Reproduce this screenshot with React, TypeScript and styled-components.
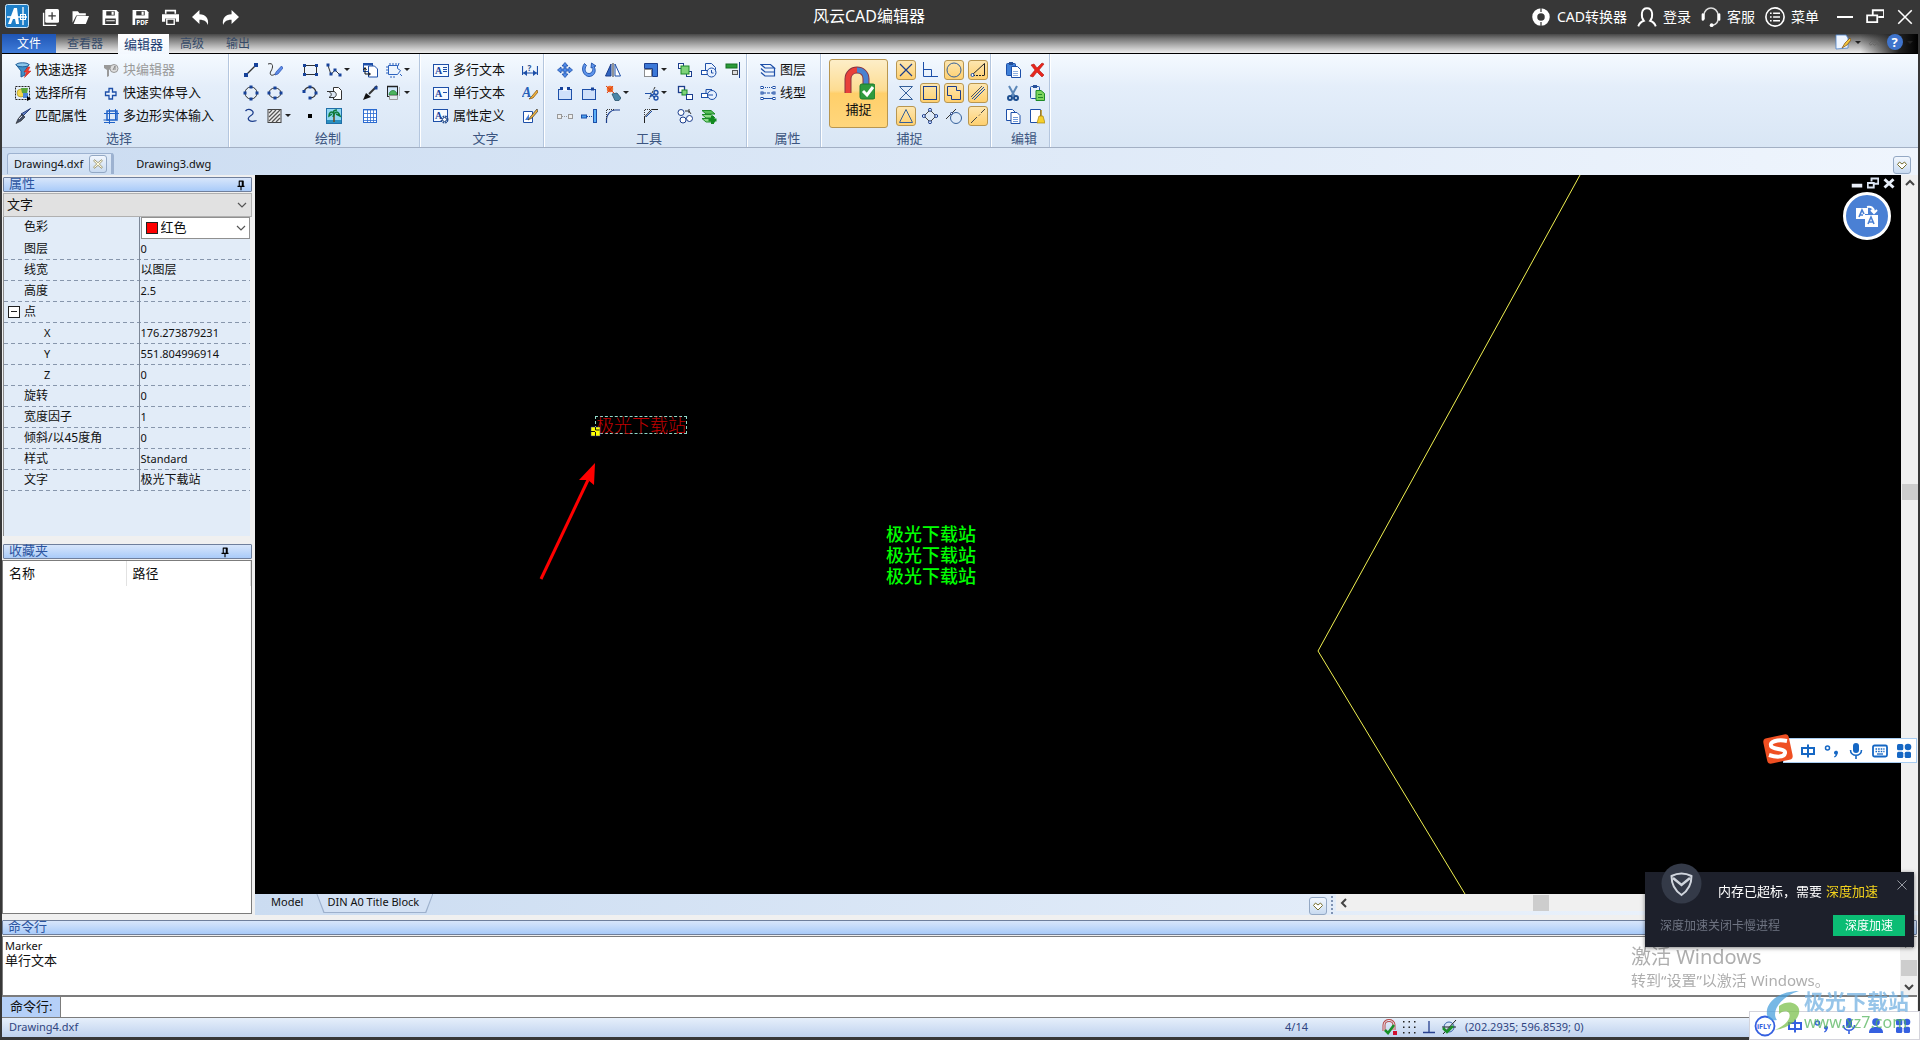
import React from "react";
import styled, { createGlobalStyle, css } from "styled-components";

const Global = createGlobalStyle`
  * { box-sizing: border-box; }
  body { margin: 0; background: #000; }
  body, button, input, select, table {
    font-family: "Noto Sans", "Noto Sans CJK SC", sans-serif;
    font-size: 12px;
    line-height: 16px;
    color: #101010;
  }
  button { background: none; border: 0; padding: 0; margin: 0; cursor: pointer; }
  svg { display: block; flex: none; }
`;

/* ---------- icons ---------- */

const B = "#1d4fa8";
const N = "#1b3d8c";
const dot = (x: number, y: number, s = 3) => (
  <rect x={x - s / 2} y={y - s / 2} width={s} height={s} fill="#16429a" stroke="none" />
);
const paper = (x: number, y: number) => (
  <path d={`M${x} ${y}h6l3 3v8h-9z`} fill="#fff" stroke={B} />
);

const ICONS: Record<string, React.ReactNode> = {
  filter: (<>
    <path d="M1 2.5 6 9v6l4-2V9l4-6.5z" fill="#3f8fc8" stroke="#1f5f9a" />
    <ellipse cx="7.5" cy="2.8" rx="6.5" ry="2" fill="#8cc6ea" stroke="#1f5f9a" />
    <path d="m13 5-4 5h2.5L9.5 15.5 16 9h-3l2-4z" fill="#ee3a30" stroke="#c02018" strokeWidth=".5" />
  </>),
  selectAll: (<>
    <rect x=".5" y="1.5" width="14" height="13" fill="none" stroke="#222" strokeDasharray="2 1" />
    <circle cx="6" cy="8" r="4" fill="#f3d64a" stroke="#9a8a20" strokeWidth=".6" />
    <path d="M6 3h7l-1 6-5-1z" fill="#57a43c" /><rect x="8" y="8" width="5" height="5" fill="#4a87d8" />
    <path d="M12 11v5l4-2z" fill="#000" />
  </>),
  match: (<>
    <path d="M15.5.5 8 8l-2-2z" fill="#5f7fc4" stroke="#2a3f78" />
    <path d="m7 6 3 3-4 4-5 2.5L3 11z" fill="#444f66" stroke="#222" strokeWidth=".6" /><path d="m4 11 3-3" stroke="#dde" />
  </>),
  block: (<>
    <path d="M1 3h8v3L6 8v6l-2 1V8L1 6z" fill="#999" /><circle cx="11" cy="6.5" r="4" fill="#ddd" stroke="#999" />
    <path d="M10 8l2-4v4" stroke="#888" fill="none" />
  </>),
  plus: <path d="M6 3.5h3.5V7H13v3.5H9.5V14H6v-3.5H2.5V7H6z" fill="#eaf3ff" stroke={B} strokeWidth="1.3" />,
  polyInput: (<>
    <rect x="4" y="3" width="10" height="9" fill="none" stroke="#1f62c8" strokeWidth="1.5" />
    <path d="M1 5.5h15M1 14.5h11M6.5 1v15M12.5 1v11M.5 12h6" stroke="#1f62c8" fill="none" />
  </>),
  line: <><path d="M3 13 13 3" stroke="#333" strokeWidth="1.3" />{dot(3, 13, 4)}{dot(13, 3, 4)}</>,
  freehand: (<>
    <path d="M1 2c6-2 5 4 3 7s0 6 4 3" fill="none" stroke="#333" />
    <path d="m14.5 4 1.5 2-5 6-3 1 1-3z" fill="#5d8be8" stroke="#2850b0" strokeWidth=".7" />
  </>),
  rect: <><rect x="2.5" y="3.5" width="12" height="9" fill="none" stroke="#333" />{dot(2.5, 3.5)}{dot(14.5, 3.5)}{dot(2.5, 12.5)}{dot(14.5, 12.5)}</>,
  polyline: <><path d="M2 3.5 5 12.5 9 8l5 5" fill="none" stroke="#333" />{dot(2, 3)}{dot(5, 12)}{dot(9, 8)}{dot(14, 13)}</>,
  insertBlock: (<>
    <rect x="1.5" y="1.5" width="9" height="8" fill="#fff" stroke={B} /><path d="M1 2.5h10" stroke={B} strokeWidth="2" />
    {paper(6.5, 4)}<path d="M3 6v6h5M1.5 8 3 5.5 4.5 8M6.5 10.5 8.5 12l-2 1.5" fill="none" stroke="#111" />
  </>),
  region: <path d="M2.5 3.5v9h9M2.5 3.5h9v3l3 2-3 4M4 1v2M7 1v2M10 1v2M13 1l-1 3M0 5h2M0 8h2M0 11h2M5 14v2M8 14v2M14 12l2 2" fill="none" stroke="#2c62be" />,
  circle: <><circle cx="8" cy="8" r="6" fill="none" stroke="#333" />{dot(8, 2)}{dot(8, 14)}{dot(2, 8)}{dot(14, 8)}</>,
  ellipse: <><ellipse cx="8" cy="8" rx="6" ry="5" fill="none" stroke="#333" />{dot(8, 3)}{dot(8, 13)}{dot(2, 8)}{dot(14, 8)}</>,
  arc: <><path d="M2 6.5C4 1 12 0 14 7c0 3-2 6-6 6" fill="none" stroke="#333" strokeWidth="1.3" />{dot(2, 6.5)}{dot(8, 2)}{dot(14, 8)}{dot(8, 13)}</>,
  solid: <><path d="M7.5 2.5h5l3 3v9h-8z" fill="#fff" stroke="#333" /><path d="M1 6.5h7c3 1 3 5 0 6H3c3-2 3-4 0-6" fill="#dfe8f4" stroke="#333" /></>,
  leader: <><path d="M15 1 7 9" stroke="#333" strokeWidth="2" /><path d="M1 15 4 8l5 4z" fill="#111" />{dot(14, 3)}</>,
  image: (<>
    <rect x="1.5" y="1.5" width="10" height="10" fill="#cfe6fa" stroke="#222" /><path d="M1 1.5h11" stroke="#222" strokeWidth="1.5" />
    <path d="M3 10c0-6 8-6 8 0z" fill="#4fb35c" stroke="#1d7a30" strokeWidth=".7" /><path d="M3.5 10.5h8v4h-8z" fill="#e4e8ec" stroke="#999" />
    <path d="M13.5 2v9" stroke="#aaa" />
  </>),
  spline: <path d="M2.5 3C6-1 14 4 8 7.5S7 15 13.5 12.5" fill="none" stroke={N} strokeWidth="1.3" />,
  hatch: <><rect x="1" y="1.5" width="13" height="13" fill="#eee" stroke="#444" /><path d="m2 5 3-3M2 9l7-7M2 13l11-11M5 14l8-8M9 14l4-4" stroke="#555" strokeWidth="1.3" /></>,
  point: <rect x="6" y="6" width="4" height="4" fill="#000" />,
  palm: (<>
    <rect x=".5" y=".5" width="15" height="15" fill="#8fd6f2" stroke="#1f6fa8" /><path d="M1 12h14v3H1z" fill="#2a8fc0" />
    <path d="M8 6v8" stroke="#6a4a20" strokeWidth="1.6" /><path d="M8 6C5 2 3 5 3 8l3-2M8 6c3-4 5-1 6 2l-4-2M8 6 7 9M8 6C6 3 9 2 11 2" stroke="#0d7a3a" strokeWidth="1.5" fill="none" />
  </>),
  table: <><rect x="1.5" y="1.5" width="13" height="13" fill="#fff" stroke="#2a6ad0" /><path d="M1 2h14M1 5.5h14M1 9.5h14M1 12.5h14M5.5 2v13M8.5 2v13M11.5 2v13" stroke="#2a6ad0" strokeWidth=".8" /></>,
  mtext: <><rect x=".5" y="2.5" width="15" height="12" fill="#f5faff" stroke={B} /><text x="2" y="12" fontSize="10" fontWeight="700" fontFamily="Liberation Serif" fill="#17409a">A</text><path d="M10 5.5h4M10 7.5h4M10 9.5h4" stroke={B} /></>,
  stext: <><rect x=".5" y="2.5" width="15" height="12" fill="#f5faff" stroke={B} /><text x="2" y="12" fontSize="10" fontWeight="700" fontFamily="Liberation Serif" fill="#17409a">A</text><path d="M10 7.5h4" stroke={B} /></>,
  attdef: <><rect x=".5" y="1.5" width="14" height="12" fill="#f5faff" stroke={B} /><text x="2" y="11" fontSize="10" fontWeight="700" fontFamily="Liberation Serif" fill="#17409a">A</text><circle cx="11.5" cy="11.5" r="3" fill="#fff" stroke="#27508f" strokeWidth="2" strokeDasharray="1.6 .8" /><circle cx="11.5" cy="11.5" r="2" fill="#fff" stroke="#27508f" /></>,
  dimText: <><path d="M.5 4v9M15.5 4v9M1 11h14" stroke={B} strokeWidth="1.2" /><path d="M1 11l4-3v6zM15 11l-4-3v6z" fill={B} /><text x="5.5" y="9" fontSize="8" fontWeight="700" fill="#27508f">?</text></>,
  fontStyle: <><text x="0" y="12" fontSize="14" fontWeight="700" fontStyle="italic" fontFamily="Liberation Serif" fill="#2760b8">A</text><path d="m15 5-5 6-3 3 4-1 5-6z" fill="#f3b53c" stroke="#7a4a10" strokeWidth=".7" /></>,
  editText: <><path d="M1.5 3.5h9v11h-9z" fill="#fff" stroke={B} /><path d="m3 12 4-6v6z" fill="#4a80d8" /><path d="m15 1-6 7-3 4 4-2 6-7z" fill="#f3b53c" stroke="#333" strokeWidth=".7" /></>,
  move: <path d="M8 .5 11 4H9v3h3V5l3.500 3L12 11V9H9v3h2l-3 3.500L5 12h2V9H4v2L.5 8 4 5v2h3V4H5z" fill="#4f8ae8" stroke={B} strokeWidth=".8" />,
  rotate: <path d="M3.5 1.5C-1 7 3 14.5 8 14.5s8-5 5-10l2-.5-4.5-3-.5 5 1.5-.5c1 3-1 6-3.500 6-4 0-5-5-2.500-8z" fill="#5d94ec" stroke={B} strokeWidth=".9" />,
  mirror: <><path d="M6 2v12H.5z" fill="#2f64c0" stroke={N} /><path d="M10 2v12h5.500z" fill="#fff" stroke={B} /><path d="M8 1v14" stroke="#333" /></>,
  scale: <><path d="M1.5 1.5h13v13h-5v-8h-8z" fill="#3b78d8" stroke={N} /><rect x="1.5" y="7.5" width="7" height="7" fill="#fff" stroke="#222" strokeDasharray="1 1" /></>,
  copyG: <><rect x="1.5" y="1.5" width="5" height="5" fill="#fff" stroke={N} /><rect x="9.5" y="9.5" width="5" height="5" fill="#fff" stroke={N} /><rect x="4" y="4" width="8" height="8" fill="#7ed37a" stroke="#1d8a28" /></>,
  copyC: <><path d="M4.5 8V1.5h6l4 4V12" fill="#eef5ff" stroke={B} /><rect x=".5" y="8.5" width="6" height="4" fill="#fff" stroke={B} /><circle cx="10.5" cy="10.5" r="4.5" fill="#e6f0ff" stroke={B} /><path d="M10.5 8v3h2" stroke={B} fill="none" /></>,
  align: <><rect x="1" y="2" width="11" height="4" fill="#2a9a38" stroke="#157022" /><rect x="7.5" y="8.5" width="5" height="4" fill="#ddd" stroke="#555" /><path d="M14.5 0v16" stroke={N} /></>,
  breakA: <><rect x="1.5" y="4.5" width="13" height="10" fill="#cfe0fa" stroke={B} /><path d="M5 4.5h6" stroke="#fff" strokeWidth="2" />{dot(4.5, 3.5, 3)}{dot(11.5, 3.5, 3)}</>,
  breakB: <><rect x="1.5" y="4.5" width="13" height="10" fill="#cfe0fa" stroke={B} />{dot(11.5, 4, 3)}</>,
  explode: <><circle cx="5" cy="4" r="3.2" fill="#f0702a" /><path d="m1 1 8 7M8 1 2 8" stroke="#e03a10" /><path d="m7 9 5-1 4 5-2 2.500-4 0z" fill="#4a86a8" stroke="#27506a" strokeWidth=".8" /></>,
  trim: <><path d="M12 2 6 14" stroke="#333" strokeDasharray="3 1" /><path d="M2 8.5h6" stroke={B} /><circle cx="13" cy="7.5" r="2" fill="none" stroke={B} strokeWidth="1.3" /><circle cx="13" cy="13" r="2" fill="none" stroke={B} strokeWidth="1.3" /><path d="m7 12 5-4M7 8l5 5" stroke={B} strokeWidth="1.3" /></>,
  copyD: <><rect x="1.5" y="1.5" width="6" height="6" fill="#fff" stroke={N} strokeWidth="1.3" /><rect x="5" y="5" width="5" height="5" fill="#7ed37a" stroke="#1d8a28" /><rect x="9.5" y="9.5" width="6" height="5" fill="#fff" stroke={N} /></>,
  copyE: <><path d="M5 8V4.500h6" fill="none" stroke={B} /><rect x=".5" y="8.5" width="6" height="4" fill="#fff" stroke={B} /><circle cx="11" cy="10" r="4.5" fill="#e6f0ff" stroke={B} /><path d="M6 10h6" stroke={B} /></>,
  joinA: <><rect x=".5" y="6.5" width="4" height="4" fill="#eee" stroke="#999" /><rect x="11.5" y="6.5" width="4" height="4" fill="#eee" stroke="#999" /><path d="M5 8.5h6" stroke="#999" strokeDasharray="1 1" /></>,
  extend: <><rect x=".5" y="7" width="5" height="3" fill="#4aa0f0" stroke={B} /><path d="M6 8.5h5" stroke={B} strokeDasharray="1 1" /><rect x="12.5" y="1.5" width="3" height="13" fill="#5ab0f8" stroke={B} /></>,
  fillet: <><path d="M1.5 15V11C2 6 6 2 10 2h5" fill="none" stroke={N} strokeWidth="1.2" /><path d="M1.5 2v9M2 1.5h8" stroke="#333" strokeDasharray="1 1" /></>,
  chamfer: <><path d="M1.5 15V9l7-7.500H15" fill="none" stroke="#222" /><path d="M1.5 2v7M2 1.5h6" stroke="#333" strokeDasharray="1 1" /><path d="m3 9 6-6" stroke={B} /></>,
  array: <><circle cx="4" cy="4.5" r="3" fill="#fff" stroke={N} /><circle cx="6" cy="12" r="3" fill="#fff" stroke={N} /><circle cx="12.5" cy="10.5" r="3" fill="#fff" stroke={N} /><path d="M8 3h4l2 3M12 1v4" fill="none" stroke="#333" /></>,
  layersAdd: <><path d="M1 10.5h9l4 3.5H5z" fill="#8fdc88" stroke="#1d8a28" /><path d="M1 6.500h9l4 3.500H5z" fill="#8fdc88" stroke="#1d8a28" /><path d="M1 2.500h9l4 3.500H5z" fill="#58bd58" stroke="#1d8a28" /><path d="M11.5 8v8M7.500 12h8" stroke="#128a20" strokeWidth="3" /></>,
  layers: <path d="M1 2.5h9.500l4 3.500H5zM1 6.500 5 10h9.500V6.500M1 10.500 5 14h9.500v-3.500" fill="none" stroke={B} strokeWidth="1.2" />,
  linetype: <><path d="M3 2.5h11" stroke={B} strokeDasharray="1 1" /><path d="M3 8h11" stroke={B} strokeDasharray="3 1" /><path d="M3 13.5h11" stroke={B} />{[2.5, 8, 13.5].map(y => <g key={y} fill="#fff" stroke={B}><rect x="1" y={y - 1} width="2" height="2" /><rect x="13" y={y - 1} width="2" height="2" /></g>)}</>,
  sX: <path d="M2 2 14 14M14 2 2 14" stroke={N} strokeWidth="1.2" />,
  sPerp: <path d="M1.5 0v14.500H16M1.500 7.500h8v7" fill="none" stroke={B} />,
  sCircle: <circle cx="8" cy="8" r="7" fill="none" stroke="#35609a" />,
  sAngle: <><path d="M2 13 14.500 1.500v12" fill="none" stroke="#222" /><path d="M3 13.500h11" stroke="#222" strokeDasharray="2 1" /><circle cx="2.5" cy="13" r="1.5" fill="#fff" stroke={B} /></>,
  sHour: <path d="M1.5 1.5h13l-13 13h13z" fill="none" stroke="#35609a" />,
  sSquare: <rect x="1.5" y="1.5" width="13" height="13" fill="none" stroke={N} />,
  sInsert: <path d="M1.5 1.5h9v4h4v9h-9v-4h-4z" fill="none" stroke={N} />,
  sPar: <><path d="M1 12 12 1" stroke="#555" /><path d="M4 15 15 4M2 14 14 2" stroke={B} /></>,
  sTri: <path d="M8 1.5 14.500 14.500h-13z" fill="none" stroke="#35609a" />,
  sQuad: <><path d="M8 2 14 8 8 14 2 8z" fill="none" stroke="#444" />{[[8, 1.8], [14.2, 8], [8, 14.2], [1.8, 8]].map(([x, y]) => <circle key={`${x}-${y}`} cx={x} cy={y} r="1.5" fill="#dfeaff" stroke={N} />)}</>,
  sTan: <><circle cx="10" cy="10" r="5.5" fill="none" stroke="#35609a" /><path d="M0 11 10 1" stroke="#333" /><circle cx="5.5" cy="5.5" r="1" fill="#fff" stroke={N} /></>,
  sExt: <path d="M1 15 7 9M9 7.500l1-1M11 5l4-4" stroke="#444" />,
  paste: <><rect x="1.5" y="1.5" width="9" height="12" rx="1" fill="#3f80d8" stroke={B} /><rect x="4" y="0" width="4" height="3" fill="#26509a" />{paper(6.5, 4.5)}<path d="M8 9.5h5M8 11.500h5M8 13.500h5" stroke="#8fb0e0" /></>,
  del: <path d="M2 3 5 2l3 4 5-5 2 1-5 6 5 5-2 2-5-5-4 5-3-1 5-6z" fill="#e8251c" stroke="#b01810" strokeWidth=".6" />,
  cut: <><path d="M4 1 9.500 11M12 1 6.500 11" stroke="#5b87b8" strokeWidth="2" /><circle cx="5" cy="13" r="2" fill="none" stroke="#1d4f90" strokeWidth="2" /><circle cx="11" cy="13" r="2" fill="none" stroke="#1d4f90" strokeWidth="2" /></>,
  pasteG: <><rect x="1.5" y="1.5" width="9" height="12" rx="1" fill="#e8f0fa" stroke={B} /><rect x="4" y="0" width="4" height="3" fill="#26509a" /><path d="M7 5.500h5l3.500 3V15.500H7z" fill="#7bd45c" stroke="#1d8a28" /><path d="M9 9.500h4M9 12.500h5" stroke="#1d8a28" /></>,
  copy: <>{paper(1.5, 1.5)}{paper(6, 4.5)}<path d="M8 9.500h5M8 11.500h5M8 13.500h5" stroke="#6f98d8" /></>,
  clean: <><path d="M1.5 1.5h10v13h-10z" fill="#fff" stroke={B} /><path d="M12 2v6" stroke="#b88a10" strokeWidth="1.5" /><path d="M10 8h4l2 7H8z" fill="#f6d02c" stroke="#a88410" strokeWidth=".7" /></>,
  newFile: <><path d="M1.5 3.500v12h12" fill="none" stroke="#fff" strokeWidth="1.3" /><rect x="3" y="0" width="13" height="13" rx="1.5" fill="#fff" /><path d="M9.500 3v7M6 6.500h7" stroke="#373737" strokeWidth="1.2" /></>,
  open: <><path d="M.5 13V2h5l1.500 2h6v2H4z" fill="#fff" /><path d="M4.500 6.500H16L13 14H1.500z" fill="#fff" /></>,
  save: <><path d="M.5 1h13l2 2v12H.5z" fill="#fff" /><path d="M4 2h8v4H4zM3 9h10v5H3z" fill="#373737" /><path d="M9 2.500h2v3H9zM4 10.500h8v1H4z" fill="#fff" /></>,
  savePdf: <><path d="M.5 1h13l2 2v12H.5z" fill="#fff" /><path d="M4 2h8v4H4z" fill="#373737" /><path d="M9 2.500h2v3H9z" fill="#fff" /><path d="M3 9h13v7H3z" fill="#373737" /><text x="4" y="15.5" fontSize="6" fontWeight="700" fill="#fff">PDF</text></>,
  print: <><path d="M3.500 4.500v-3h9v3" fill="none" stroke="#fff" strokeWidth="1.5" /><path d="M0 5h16v7h-3V9H3v3H0z" fill="#fff" /><path d="M4.500 9.500h7v5h-7z" fill="none" stroke="#fff" strokeWidth="1.3" /></>,
  undo: <path d="M7 1v4c6 0 9 4 8 10-1-3-3-5-8-5v4L0 7.500z" fill="#fff" />,
  redo: <path d="M9 1v4C3 5 0 9 1 15c1-3 3-5 8-5v4l7-6.500z" fill="#fff" />,
  ring: <><circle cx="8" cy="8" r="5" fill="none" stroke="#fff" strokeWidth="4" /><path d="M8 0v4M8 12v4" stroke="#373737" /></>,
  user: <path d="M1 15.500c1-3 3-4 4.500-4.500C3 8 3 1 8 1s5 7 2.500 10c1.500.5 3.500 1.500 4.500 4.500" fill="none" stroke="#fff" strokeWidth="1.5" />,
  headset: <><path d="M2.500 10V6.500C2.500-1 13.500-1 13.500 6.500V10c0 3-2 4-4 4.500" fill="none" stroke="#ddd" strokeWidth="1.2" /><path d="M1.500 6v4M14.500 6v4" stroke="#fff" strokeWidth="2" strokeLinecap="round" /><circle cx="8.5" cy="14.5" r="1.5" fill="#fff" /></>,
  menu: <><circle cx="8" cy="8" r="7.3" fill="none" stroke="#fff" strokeWidth="1.3" /><path d="M6.500 5h5.500M6.500 8h5.500M6.500 11h5.500M4 5h1.300M4 8h1.300M4 11h1.300" stroke="#fff" strokeWidth="1.3" /></>,
  min: <path d="M0 8h16" stroke="#fff" strokeWidth="2" />,
  restore: <path d="M1 6.500h9v6H1zM6 6V2h10v6h-5" fill="none" stroke="#fff" strokeWidth="1.6" />,
  close: <path d="m2 2 12 12M14 2 2 14" stroke="#fff" strokeWidth="1.4" />,
  thinClose: <path d="m2 2 12 12M14 2 2 14" stroke="#9a9da6" strokeWidth="1.3" />,
  editDoc: <><path d="M1 1h10l2 3v10L1 15z" fill="#eef5ff" stroke="#4a80c8" strokeWidth=".8" /><path d="m15 4-5 5-3 5 5-3 4-5z" fill="#f3c53c" stroke="#7a4a10" strokeWidth=".7" /></>,
  help: <><circle cx="8" cy="8" r="8" fill="#3f74cc" /><text x="4.5" y="13" fontSize="13" fontWeight="700" fill="#fff">?</text></>,
  collapse: <path d="M4 8.500 6.500 6l2 2 2-2L13 8.500 12 10l-1.500-1.500L8.500 10l-2-1.500L5 10z" fill="none" stroke="#666" strokeWidth=".8" />,
  heart: <path d="M8 12 3.500 7.500 5.500 5 8 7l2.500-2 2 2.500z" fill="#fff" stroke="#777030" />,
  closeTab: <path d="m4 3 4 3.500L12 3l1 1.500L9.500 8l3.500 3.500-1 1.500-4-3.500L4 13l-1-1.500L6.500 8 3 4.500z" fill="#fffbe0" stroke="#807850" strokeWidth=".8" />,
  pin: <path d="M5.500 3.500h5M6 3.500v6M9.500 3v6.500M10.500 3v6.500M4 9.500h8M8 10v4" fill="none" stroke="#000" strokeWidth="1.3" />,
  chevDown: <path d="m4 6 4 4 4-4" fill="none" stroke="#555" strokeWidth="1.2" />,
  sbUp: <path d="m4 10 4-4 4 4" fill="none" stroke="#444" strokeWidth="2" />,
  sbDown: <path d="m4 6 4 4 4-4" fill="none" stroke="#444" strokeWidth="2" />,
  sbLeft: <path d="M10 4 6 8l4 4" fill="none" stroke="#444" strokeWidth="2" />,
  mdiMin: <path d="M1 11.500h14" stroke="#e8eef8" strokeWidth="5" />,
  mdiRestore: <path d="M1 8h8v6H1zM6 6V2h9v7h-5" fill="none" stroke="#dbe4f2" strokeWidth="2.5" />,
  mdiClose: <path d="m2 3 12 11M14 3 2 14" stroke="#e8eef8" strokeWidth="4" />,
  statMagnet: <><path d="M3 12V6c0-6 10-6 10 0v5" fill="none" stroke="#b84848" strokeWidth="3" /><path d="M3 12V6c0-6 10-6 10 0v5" fill="none" stroke="#e8eef8" /><path d="m4 11 3 3 6-8" stroke="#189028" strokeWidth="2.5" fill="none" /><rect x="12" y="12" width="4" height="4" fill="#d01030" /></>,
  statGrid: <>{[2, 7.5, 13].map(x => [2, 7.5, 13].map(y => <rect key={`${x}-${y}`} x={x} y={y} width="1.5" height="1.5" fill="#222" />))}</>,
  statPerp: <path d="M8 2v11M2 13.500h12" stroke="#27408f" strokeWidth="1.3" />,
  statTarget: <><circle cx="8" cy="8" r="5" fill="none" stroke="#3a66a8" /><path d="M2 15 15 1M1 8h14" stroke="#222" /><path d="m2 9 4 4 6-6" stroke="#189028" strokeWidth="2.5" fill="none" /></>,
  zh: <path d="M2 5h12v6H2zM8 1.500v13" fill="none" stroke="currentColor" strokeWidth="2" />,
  punct: <><circle cx="3.5" cy="5" r="2" fill="none" stroke="currentColor" strokeWidth="1.5" /><path d="M10 9.500a2 2 0 1 1 3.500 1.500c-.5 2-1.500 3-3 3.500l-.5-1c1-.5 1.500-1 1.500-2-1 0-1.500-1-1.500-2z" fill="currentColor" /></>,
  mic: <><rect x="5" y="0" width="6" height="10" rx="3" fill="currentColor" /><path d="M2.500 7c0 7 11 7 11 0M8 12v4" fill="none" stroke="currentColor" strokeWidth="1.6" /></>,
  keyboard: <><rect x="1" y="2.5" width="14" height="11" rx="1.5" fill="none" stroke="currentColor" strokeWidth="1.8" /><path d="M3.500 6h9M3.500 8.500h9" stroke="currentColor" strokeWidth="1.6" strokeDasharray="1.6 1" /><path d="M5 11h6" stroke="currentColor" strokeWidth="1.3" /></>,
  apps: <><rect x="1" y="1" width="6.3" height="6.3" rx="1.5" fill="currentColor" /><rect x="1" y="8.7" width="6.3" height="6.3" rx="1.5" fill="currentColor" /><rect x="8.7" y="8.7" width="6.3" height="6.3" rx="1.5" fill="currentColor" /><circle cx="12" cy="4" r="3.3" fill="currentColor" /></>,
  person: <><circle cx="8" cy="4" r="3.8" fill="currentColor" /><path d="M1 15c0-5 3-6 7-6s7 1 7 6z" fill="currentColor" /></>,
};

const Icon = ({ n, s = 16 }: { n: string; s?: number }) => (
  <svg width={s} height={s} viewBox="0 0 16 16" aria-hidden="true">{ICONS[n]}</svg>
);

/* ---------- shell ---------- */

const Shell = styled.div`
  height: 100vh;
  min-width: 1200px;
  display: flex;
  flex-direction: column;
  background: #373737;
  overflow: hidden;
`;
const TitleBar = styled.header`
  display: flex;
  align-items: center;
  height: 34px;
  flex: none;
  color: #fff;
`;
const QuickBar = styled.div`
  display: flex;
  align-items: center;
  padding: 0 4px 6px 5px;
`;
const QuickButton = styled.button`
  display: grid;
  place-items: center;
  width: 30px;
  height: 24px;
  padding-top: 6px;
`;
const LogoSlot = styled.span`
  margin-right: 6px;
  padding-top: 4px;
`;
const AppTitle = styled.h1`
  flex: 1;
  margin: 0;
  padding: 0 42px 2px 0;
  text-align: center;
  font-size: 16px;
  line-height: 24px;
  font-weight: 400;
`;
const TitleActions = styled.div`
  display: flex;
  gap: 10px;
  margin-right: 11px;
`;
const TitleAction = styled.button`
  display: flex;
  align-items: center;
  gap: 6px;
  color: #fff;
  font-size: 14px;
  line-height: 20px;
  white-space: nowrap;
`;
const WinButton = styled.button`
  display: grid;
  place-items: center;
  width: 30px;
  height: 24px;
`;
const Frame = styled.div`
  flex: 1;
  min-height: 0;
  display: flex;
  flex-direction: column;
  margin: 0 2px 3px;
  background: #f0f0f0;
`;

/* ---------- ribbon ---------- */

const TabStrip = styled.nav`
  display: flex;
  align-items: stretch;
  height: 20px;
  flex: none;
  padding-right: 5px;
  border-bottom: 1px solid #000;
  background: linear-gradient(90deg, transparent 97%, #222 99%, #000 100%), linear-gradient(#474747, #787878 25%, #b0b0b0 60%, #eee);
`;
const RibbonTab = styled.button<{ $kind?: "file" | "on" }>`
  padding: 0 11px;
  line-height: 18px;
  color: #364a68;
  ${p => p.$kind === "file" && css`
    width: 54px;
    color: #fff;
    background: linear-gradient(#1f55b4, #3f7cda);
  `}
  ${p => p.$kind === "on" && css`
    width: 51px;
    padding: 0;
    font-size: 13px;
    margin: 0 0 -1px 4px;
    color: #1b3c70;
    background: linear-gradient(#fff, #f3f8fe);
  `}
`;
const StripTools = styled.div`
  display: flex;
  align-items: flex-start;
  gap: 4px;
  margin-left: auto;
`;
const PlainButton = styled.button`
  display: flex;
  align-items: center;
  gap: 4px;
`;
const Caret = styled.span`
  width: 0;
  height: 0;
  border: 3px solid transparent;
  border-top-color: #222;
  border-bottom: 0;
`;
const Ribbon = styled.section`
  display: flex;
  flex: none;
  height: 94px;
  background: linear-gradient(#f5faff, #e4eefa 35%, #d9e6f5);
  border-bottom: 1px solid #a3b0c4;
`;
const Group = styled.div<{ $w: number }>`
  width: ${p => p.$w}px;
  flex: none;
  display: flex;
  flex-direction: column;
  justify-content: space-between;
  padding-top: 5px;
  border-right: 1px solid #b4c6de;
  box-shadow: 1px 0 0 #fff;
`;
const GroupTitle = styled.div`
  padding-left: 8px;
  text-align: center;
  font-size: 13px;
  line-height: 18px;
  color: #3c5580;
`;
const GroupBody = styled.div<{ $pad: number }>`
  display: flex;
  height: 69px;
  padding-left: ${p => p.$pad}px;
`;
const ToolGrid = styled.div<{ $cols: string }>`
  display: grid;
  grid-template-columns: ${p => p.$cols};
  grid-auto-rows: 23px;
  margin-top: -1px;
`;
const Tool = styled.button`
  display: flex;
  align-items: center;
  gap: 2px;
  padding-left: 4px;
`;
const TextTool = styled.button<{ $off?: boolean }>`
  display: flex;
  align-items: center;
  gap: 4px;
  font-size: 13px;
  line-height: 18px;
  white-space: nowrap;
  color: ${p => (p.$off ? "#9a9a9a" : "#111")};
`;
const ToolLabel = styled.span`
  padding-bottom: 2px;
`;
const SnapMain = styled.button`
  display: flex;
  flex-direction: column;
  align-items: center;
  width: 59px;
  height: 69px;
  margin-right: 8px;
  padding-top: 6px;
  border: 1px solid #b89650;
  border-radius: 3px;
  background: linear-gradient(#fdeec8, #fddc92 45%, #ffcf6a 50%, #ffd67c);
  font-size: 13px;
  line-height: 18px;
`;
const SnapGrid = styled.div`
  display: grid;
  grid-template-columns: repeat(4, 20px);
  grid-auto-rows: 20px;
  gap: 3px 4px;
  padding-top: 1px;
`;
const Snap = styled.button<{ $on?: boolean }>`
  display: grid;
  place-items: center;
  border-radius: 3px;
  border: 1px solid ${p => (p.$on ? "#b89650" : "transparent")};
  background: ${p => (p.$on ? "linear-gradient(#fde6b0, #ffd070)" : "none")};
`;

/* ---------- document tabs ---------- */

const DocTabs = styled.div`
  display: flex;
  align-items: flex-end;
  height: 27px;
  flex: none;
  padding: 0 7px 1px 5px;
  background: linear-gradient(90deg, #cbdcf1, #eff5fd);
`;
const DocTab = styled.div<{ $on?: boolean }>`
  display: flex;
  align-items: center;
  height: 21px;
  font-size: 11px;
  padding: 0 ${p => (p.$on ? 4 : 20)}px 0 ${p => (p.$on ? 6 : 22)}px;
  gap: 6px;
  ${p => p.$on && css`
    border: 1px solid #9db2d0;
    border-right-width: 3px;
    border-bottom: 0;
    border-radius: 3px 3px 0 0;
    background: linear-gradient(#dfeaf8, #cddef2);
  `}
`;
const SmallButton = styled.button`
  display: grid;
  place-items: center;
  width: 18px;
  height: 18px;
  border: 1px solid #93a8c4;
  border-radius: 3px;
  background: linear-gradient(#f2f7fe, #c8daf0);
`;
const Spacer = styled.div`
  flex: 1;
`;

/* ---------- work area ---------- */

const Work = styled.div`
  flex: 1;
  min-height: 0;
  display: grid;
  grid-template-columns: 253px minmax(0, 1fr);
`;
const Side = styled.aside`
  display: flex;
  flex-direction: column;
  padding: 2px 3px 0 1px;
  min-height: 0;
`;
const PaneTitle = styled.div<{ $pinRight?: number }>`
  display: flex;
  align-items: center;
  justify-content: space-between;
  flex: none;
  height: 15px;
  padding: 0 ${p => p.$pinRight ?? 3}px 0 5px;
  border: 1px solid #6f7f9c;
  border-radius: 1px;
  background: linear-gradient(#d8e6fb, #a9cbf9);
  color: #2c55a0;
  font-size: 13px;
  line-height: 13px;
`;
const PaneName = styled.span`
  padding-bottom: 2px;
`;
const Field = styled.select`
  appearance: none;
  border: 0;
  padding: 0 0 2px;
  margin: 0;
  flex: 1;
  min-width: 0;
  height: 20px;
  background: transparent;
  font-size: 13px;
  outline: none;
`;
const TypeBox = styled.div`
  display: flex;
  align-items: center;
  height: 24px;
  flex: none;
  margin-top: 1px;
  padding: 0 1px 0 3px;
  border: 1px solid #b0b0b0;
  background: #e1e1e1;
`;
const PropArea = styled.div`
  flex: none;
  height: 319px;
  margin-right: 2px;
  border-left: 1px solid #8a8a8a;
  background: #e2ecf8;
`;
const PropTable = styled.table`
  width: 100%;
  border-collapse: collapse;
  table-layout: fixed;
`;
const PropRow = styled.tr`
  height: 21px;
  background: repeating-linear-gradient(90deg, #8796ac 0 4px, transparent 4px 7px) left bottom / 100% 1px no-repeat;
`;
const PropName = styled.th<{ $level: number }>`
  width: 135px;
  padding: 0 0 2px ${p => [4, 20, 40][p.$level]}px;
  border-right: 1px solid #7c8797;
  text-align: left;
  font-weight: 400;
  font-size: ${p => (p.$level === 2 ? 11 : 12)}px;
  line-height: 16px;
`;
const NodeLabel = styled.span`
  display: flex;
  align-items: center;
  gap: 4px;
`;
const Toggle = styled.button`
  width: 12px;
  height: 12px;
  border: 1px solid #222;
  background: linear-gradient(#222, #222) center / 6px 1px no-repeat #fff;
`;
const PropValue = styled.td<{ $latin?: boolean }>`
  padding: 0 0 2px 1px;
  font-size: ${p => (p.$latin ? 11 : 12)}px;
  line-height: 16px;
`;
const ColorCell = styled.td`
  padding: 0 0 0 1px;
`;
const ColorBox = styled.div`
  display: flex;
  align-items: center;
  gap: 3px;
  height: 22px;
  padding: 0 0 0 4px;
  border: 1px solid #909090;
  background: #fff;
`;
const Swatch = styled.span`
  width: 12px;
  height: 12px;
  border: 1px solid #222;
  background: #f00;
`;
const FavPane = styled.div`
  flex: 1;
  margin: 1px 0 6px -1px;
  border: 1px solid #7c7c7c;
  background: #fff;
`;
const FavTable = styled.table`
  width: 100%;
  border-collapse: collapse;
  th {
    height: 25px;
    padding: 0 0 2px 6px;
    border-right: 1px solid #e2e2e2;
    text-align: left;
    font-weight: 400;
    font-size: 13px;
  }
  th:first-child { width: 123px; }
`;
const Gap = styled.div`
  height: 8px;
  flex: none;
`;
const Main = styled.main`
  display: flex;
  flex-direction: column;
  min-width: 0;
  min-height: 0;
`;
const CanvasRow = styled.div`
  flex: 1;
  min-height: 0;
  display: flex;
`;
const Canvas = styled.div`
  position: relative;
  flex: 1;
  background: #000;
  overflow: hidden;
`;
const Drawing = styled.svg`
  position: absolute;
  left: 0;
  top: 0;
`;
const RedText = styled.div`
  position: absolute;
  left: 340px;
  top: 241px;
  border: 1px dashed #8fd8c8;
  color: #c00000;
  font-size: 18px;
  font-weight: 300;
  line-height: 16px;
`;
const GreenText = styled.div`
  position: absolute;
  left: 631px;
  top: 349px;
  color: #0f0;
  font-size: 18px;
  font-weight: 500;
  line-height: 21px;
`;
const MdiButtons = styled.div`
  position: absolute;
  right: 6px;
  top: 2px;
  display: flex;
  gap: 4px;
`;
const TranslateBadge = styled.button`
  position: absolute;
  right: 10px;
  top: 17px;
  width: 48px;
  height: 48px;
  display: grid;
  place-items: center;
  border: 3px solid #fff;
  border-radius: 50%;
  background: #4a80d4;
`;
const VBar = styled.div<{ $at: number }>`
  display: grid;
  grid-template-rows: ${p => p.$at}% 17px 1fr;
  justify-items: center;
  width: 17px;
  flex: none;
  background: #f0f0f0;
`;
const Thumb = styled.span`
  width: 16px;
  height: 16px;
  background: #cdcdcd;
`;
const BottomEnd = styled.span`
  align-self: end;
`;
const SheetBar = styled.div`
  display: flex;
  height: 26px;
  flex: none;
  border-bottom: 5px solid #f0f0f0;
  background: linear-gradient(90deg, #cbdcf1, #eff5fd);
`;
const SheetTab = styled.button<{ $front?: boolean }>`
  height: 19px;
  font-size: 11px;
  line-height: 15px;
  padding: 0 ${p => (p.$front ? 14 : 13)}px 4px ${p => (p.$front ? 11 : 16)}px;
  ${p => p.$front && css`
    background: #9db0cc;
    clip-path: polygon(0 0, 100% 0, calc(100% - 7px) 100%, 7px 100%);
    position: relative;
    &::before {
      content: "";
      position: absolute;
      inset: 0 1px 1px;
      background: #d3e1f4;
      clip-path: polygon(0 0, 100% 0, calc(100% - 7px) 100%, 7px 100%);
    }
    & > span { position: relative; }
  `}
`;
const SheetMore = styled(SmallButton)`
  align-self: flex-end;
`;
const Splitter = styled.div`
  width: 2px;
  margin: 2px 3px 0 4px;
  background: repeating-linear-gradient(#7f93b4 0 2px, transparent 2px 4px);
`;
const HBar = styled.div`
  display: grid;
  grid-template-columns: 16px 181px 17px 1fr;
  align-items: center;
  width: 582px;
  height: 17px;
  background: #f0f0f0;
`;

/* ---------- command line ---------- */

const Command = styled.section`
  flex: none;
  padding-right: 1px;
`;
const Log = styled.div`
  display: flex;
  justify-content: space-between;
  height: 59px;
  margin-top: 1px;
  border-top: 1px solid #7c7c7c;
  border-left: 1px solid #7c7c7c;
  background: #fff;
`;
const LogText = styled.div`
  padding: 2px;
  line-height: 14px;
`;
const LogLine = styled.div<{ $big?: boolean }>`
  font-size: ${p => (p.$big ? 13 : 11)}px;
`;
const InputRow = styled.label`
  display: flex;
  height: 23px;
  border-top: 2px solid #7c7c7c;
  border-bottom: 1px solid #7c7c7c;
  background: #fff;
`;
const InputLabel = styled.span`
  padding: 0 8px;
  border-right: 1px solid #7c7c7c;
  background: #b5d0f8;
  font-size: 13px;
  line-height: 18px;
`;
const CommandInput = styled.input`
  flex: 1;
  border: 0;
  outline: none;
  background: #fff;
`;
const StatusBar = styled.footer`
  display: flex;
  align-items: center;
  height: 19px;
  flex: none;
  padding-bottom: 2px;
  background: linear-gradient(#e6effb, #bfd2ee);
  color: #2f4480;
  font-size: 11px;
`;
const StatusFile = styled.span`
  flex: 1;
  padding-left: 7px;
`;
const StatusCount = styled.span`
  width: 96px;
`;
const StatusIcons = styled.span`
  display: flex;
  gap: 4px;
  width: 84px;
`;
const StatusPos = styled.span`
  width: 453px;
`;

/* ---------- floating windows ---------- */

const ImeBar = styled.div`
  position: fixed;
  right: 3px;
  bottom: 277px;
  display: flex;
  align-items: center;
  gap: 8px;
  height: 25px;
  padding: 0 4px 0 16px;
  border: 1px solid #a8cdf2;
  background: #fff;
  color: #1567c4;
`;
const ImeLogo = styled.span`
  position: absolute;
  left: -22px;
  top: -6px;
`;
const Toast = styled.div`
  position: fixed;
  right: 6px;
  bottom: 93px;
  width: 269px;
  height: 75px;
  padding: 10px 9px 11px 15px;
  display: flex;
  flex-direction: column;
  justify-content: space-between;
  background: #1d202b;
  box-shadow: 0 1px 4px rgba(0, 0, 0, 0.5);
  color: #fff;
`;
const ToastTop = styled.div`
  display: flex;
  align-items: flex-start;
  justify-content: space-between;
  padding-left: 58px;
  font-size: 13px;
  line-height: 18px;
  white-space: nowrap;
`;
const Gold = styled.a`
  margin-left: 4px;
  color: #f2d21c;
  text-decoration: none;
`;
const ToastBottom = styled.div`
  display: flex;
  align-items: center;
  justify-content: space-between;
  color: #6f7482;
`;
const Boost = styled.button`
  width: 72px;
  height: 21px;
  background: #0bbd74;
  color: #fff;
`;
const Shield = styled.span`
  position: absolute;
  left: 16px;
  top: -9px;
`;
const ToastClose = styled.button`
  margin: -3px -3px 0 0;
`;
const Activate = styled.div`
  position: fixed;
  right: 92px;
  bottom: 50px;
  width: 197px;
  color: #aeaeae;
  font-size: 15px;
  line-height: 20px;
  white-space: nowrap;
`;
const ActivateTitle = styled.div`
  font-size: 20px;
  line-height: 26px;
`;
const IflyBar = styled.div`
  position: fixed;
  right: 0;
  bottom: 0;
  display: flex;
  align-items: center;
  gap: 11px;
  width: 171px;
  height: 29px;
  padding-left: 4px;
  border: 1px solid #d4d4dc;
  background: #fff;
  color: #3560e0;
`;
const SiteMark = styled.div`
  position: fixed;
  right: 11px;
  bottom: 9px;
  display: flex;
  gap: 1px;
  opacity: 0.75;
  pointer-events: none;
`;
const SiteName = styled.div`
  color: #74b2e2;
  font-size: 21px;
  font-weight: 700;
  line-height: 24px;
`;
const SiteUrl = styled.div`
  color: #54b45c;
  font-size: 16px;
  line-height: 18px;
`;

/* ---------- data ---------- */

type Cell = [string, string, boolean?];

const DRAW: Cell[] = [
  ["line", "直线"], ["freehand", "手绘"], ["rect", "矩形"], ["polyline", "多段线", true], ["insertBlock", "插入块"], ["region", "区域", true],
  ["circle", "圆"], ["ellipse", "椭圆"], ["arc", "圆弧"], ["solid", "实体"], ["leader", "引线"], ["image", "图像", true],
  ["spline", "样条"], ["hatch", "填充", true], ["point", "点"], ["palm", "图片"], ["table", "表格"],
];
const TOOLS: (Cell | null)[] = [
  ["move", "移动"], ["rotate", "旋转"], ["mirror", "镜像"], ["scale", "缩放", true], ["copyG", "复制"], ["copyC", "偏移"], ["align", "对齐"],
  ["breakA", "打断"], ["breakB", "断点"], ["explode", "分解", true], ["trim", "修剪", true], ["copyD", "粘贴副本"], ["copyE", "偏移副本"], null,
  ["joinA", "合并"], ["extend", "延伸"], ["fillet", "圆角"], ["chamfer", "倒角"], ["array", "阵列"], ["layersAdd", "添加图层"],
];
const SNAPS: Cell[] = [
  ["sX", "交点", true], ["sPerp", "垂足"], ["sCircle", "圆心", true], ["sAngle", "角度", true],
  ["sHour", "最近点"], ["sSquare", "端点", true], ["sInsert", "插入点", true], ["sPar", "平行", true],
  ["sTri", "中点", true], ["sQuad", "象限点"], ["sTan", "切点"], ["sExt", "延长线", true],
];
const EDIT: Cell[] = [["paste", "粘贴"], ["del", "删除"], ["cut", "剪切"], ["pasteG", "选择性粘贴"], ["copy", "复制"], ["clean", "清理"]];
const QUICK: [string, string][] = [["newFile", "新建"], ["open", "打开"], ["save", "保存"], ["savePdf", "PDF"], ["print", "打印"], ["undo", "撤销"], ["redo", "重做"]];
const ACTIONS: [string, string][] = [["ring", "CAD转换器"], ["user", "登录"], ["headset", "客服"], ["menu", "菜单"]];
const PROPS: [string, string, number][] = [
  ["图层", "0", 1], ["线宽", "以图层", 1], ["高度", "2.5", 1], ["点", "", 0],
  ["X", "176.273879231", 2], ["Y", "551.804996914", 2], ["Z", "0", 2],
  ["旋转", "0", 1], ["宽度因子", "1", 1], ["倾斜/以45度角", "0", 1], ["样式", "Standard", 1], ["文字", "极光下载站", 1],
];

const Tools = ({ items, cols }: { items: (Cell | null)[]; cols: string }) => (
  <ToolGrid $cols={cols}>
    {items.map((c, i) => c
      ? <Tool key={i} aria-label={c[1]}><Icon n={c[0]} />{c[2] && <Caret />}</Tool>
      : <span key={i} />)}
  </ToolGrid>
);

const Labelled = ({ icon, text, off }: { icon: string; text: string; off?: boolean }) => (
  <TextTool $off={off}><Icon n={icon} /><ToolLabel>{text}</ToolLabel></TextTool>
);

const RibbonBar = () => (
  <Ribbon>
    <Group $w={227}>
      <GroupBody $pad={13}>
        <ToolGrid $cols="88px auto">
          <Labelled icon="filter" text="快速选择" />
          <Labelled icon="block" text="块编辑器" off />
          <Labelled icon="selectAll" text="选择所有" />
          <Labelled icon="plus" text="快速实体导入" />
          <Labelled icon="match" text="匹配属性" />
          <Labelled icon="polyInput" text="多边形实体输入" />
        </ToolGrid>
      </GroupBody>
      <GroupTitle>选择</GroupTitle>
    </Group>
    <Group $w={191}>
      <GroupBody $pad={10}><Tools items={DRAW} cols="24px 35px 24px 36px 24px 36px" /></GroupBody>
      <GroupTitle>绘制</GroupTitle>
    </Group>
    <Group $w={124}>
      <GroupBody $pad={13}>
        <ToolGrid $cols="85px auto">
          <Labelled icon="mtext" text="多行文本" />
          <Tool aria-label="文字宽度"><Icon n="dimText" /></Tool>
          <Labelled icon="stext" text="单行文本" />
          <Tool aria-label="文字样式"><Icon n="fontStyle" /></Tool>
          <Labelled icon="attdef" text="属性定义" />
          <Tool aria-label="编辑文字"><Icon n="editText" /></Tool>
        </ToolGrid>
      </GroupBody>
      <GroupTitle>文字</GroupTitle>
    </Group>
    <Group $w={203}>
      <GroupBody $pad={9}><Tools items={TOOLS} cols="24px 24px 38px 34px 24px 24px 24px" /></GroupBody>
      <GroupTitle>工具</GroupTitle>
    </Group>
    <Group $w={74}>
      <GroupBody $pad={13}>
        <ToolGrid $cols="auto">
          <Labelled icon="layers" text="图层" />
          <Labelled icon="linetype" text="线型" />
        </ToolGrid>
      </GroupBody>
      <GroupTitle>属性</GroupTitle>
    </Group>
    <Group $w={170}>
      <GroupBody $pad={8}>
        <SnapMain>
          <svg width="32" height="34" viewBox="0 0 32 34" aria-hidden="true">
            <path d="M5 27V13C5 1 23 1 23 13v8" fill="none" stroke="#8a3440" strokeWidth="7" />
            <path d="M5 27V13C5 8 9 4 14 4" fill="none" stroke="#e8403a" strokeWidth="5" />
            <path d="M14 4c6 0 9 4 9 9v8" fill="none" stroke="#4a82d0" strokeWidth="5" />
            <rect x="17" y="18" width="15" height="15" rx="2" fill="#2f9a3e" stroke="#1c7a2c" />
            <path d="m20 25 4 4 6-8" fill="none" stroke="#fff" strokeWidth="3" />
          </svg>
          捕捉
        </SnapMain>
        <SnapGrid>
          {SNAPS.map(([n, label, on]) => <Snap key={n} $on={on} aria-label={label}><Icon n={n} /></Snap>)}
        </SnapGrid>
      </GroupBody>
      <GroupTitle>捕捉</GroupTitle>
    </Group>
    <Group $w={59}>
      <GroupBody $pad={10}><Tools items={EDIT} cols="24px 24px" /></GroupBody>
      <GroupTitle>编辑</GroupTitle>
    </Group>
  </Ribbon>
);

const SidePanel = () => (
  <Side>
    <PaneTitle><PaneName>属性</PaneName><Icon n="pin" s={14} /></PaneTitle>
    <TypeBox>
      <Field aria-label="对象类型"><option>文字</option></Field>
      <Icon n="chevDown" />
    </TypeBox>
    <PropArea>
      <PropTable>
        <tbody>
          <tr>
            <PropName $level={1}>色彩</PropName>
            <ColorCell>
              <ColorBox>
                <Swatch />
                <Field aria-label="色彩"><option>红色</option></Field>
                <Icon n="chevDown" />
              </ColorBox>
            </ColorCell>
          </tr>
          {PROPS.map(([name, value, level]) => (
            <PropRow key={name}>
              <PropName $level={level}>
                {level === 0 ? <NodeLabel><Toggle aria-label="折叠" />{name}</NodeLabel> : name}
              </PropName>
              <PropValue $latin={/^[\x20-\x7e]*$/.test(value)}>{value}</PropValue>
            </PropRow>
          ))}
        </tbody>
      </PropTable>
    </PropArea>
    <Gap />
    <PaneTitle $pinRight={19}><PaneName>收藏夹</PaneName><Icon n="pin" s={14} /></PaneTitle>
    <FavPane>
      <FavTable><thead><tr><th>名称</th><th>路径</th></tr></thead></FavTable>
    </FavPane>
  </Side>
);

const Workspace = () => (
  <Main>
    <CanvasRow>
      <Canvas>
        <Drawing width="1646" height="719" viewBox="0 0 1646 719" aria-hidden="true">
          <path d="M1325 0 1063 476 1210 719" fill="none" stroke="#f0f050" strokeWidth="1" />
          <path d="M286 404 333 305" stroke="#f00" strokeWidth="3" />
          <path d="M340 288l-1 22-6-5-9 0z" fill="#f00" />
        </Drawing>
        <RedText>极光下载站</RedText>
        <Drawing width="360" height="270" viewBox="0 0 360 270" aria-hidden="true">
          <rect x="336" y="252" width="9" height="9" fill="#ff0" stroke="#2030a0" strokeWidth=".5" />
          <path d="M336 256.500h4M340.500 261v-4M340.500 252v3h4" fill="none" stroke="#111" />
        </Drawing>
        <GreenText>极光下载站<br />极光下载站<br />极光下载站</GreenText>
        <MdiButtons>
          <PlainButton aria-label="最小化"><Icon n="mdiMin" s={12} /></PlainButton>
          <PlainButton aria-label="还原"><Icon n="mdiRestore" s={12} /></PlainButton>
          <PlainButton aria-label="关闭图纸"><Icon n="mdiClose" s={12} /></PlainButton>
        </MdiButtons>
        <TranslateBadge aria-label="翻译">
          <svg width="24" height="24" viewBox="0 0 24 24" aria-hidden="true">
            <path d="M1 4h12v6h-3v5H1z" fill="#fff" /><rect x="10" y="11" width="13" height="12" fill="#fff" />
            <path d="m4 13 3-7 2 4M5 11h3M13 20l3-7 3 7M14 18h4" fill="none" stroke="#4a80d4" strokeWidth="1.6" />
            <path d="M12 3c4-1 7 1 7 5M16 6l3 3 3-3" fill="none" stroke="#fff" strokeWidth="2" />
          </svg>
        </TranslateBadge>
      </Canvas>
      <VBar $at={43}><Icon n="sbUp" /><Thumb /></VBar>
    </CanvasRow>
    <SheetBar>
      <SheetTab>Model</SheetTab>
      <SheetTab $front><span>DIN A0 Title Block</span></SheetTab>
      <Spacer />
      <SheetMore aria-label="更多布局"><Icon n="heart" /></SheetMore>
      <Splitter />
      <HBar><Icon n="sbLeft" /><span /><Thumb /></HBar>
    </SheetBar>
  </Main>
);

const Logo = () => (
  <svg width="24" height="24" viewBox="0 0 24 24" aria-hidden="true">
    <rect x=".5" y=".5" width="23" height="23" rx="2" fill="#1e7fc8" stroke="#cfe8fa" />
    <path d="m3 20 6-16h3l2 16h-3l-1-5H8l-2 5z" fill="#fff" />
    <path d="M2 13h20M18 3v18" stroke="#fff" strokeWidth="1.3" /><rect x="15.5" y="10.5" width="5" height="5" fill="none" stroke="#fff" />
  </svg>
);

export default function App() {
  return (
    <Shell>
      <Global />
      <TitleBar>
        <QuickBar>
          <LogoSlot><Logo /></LogoSlot>
          {QUICK.map(([n, label]) => <QuickButton key={n} aria-label={label}><Icon n={n} s={17} /></QuickButton>)}
        </QuickBar>
        <AppTitle>风云CAD编辑器</AppTitle>
        <TitleActions>
          {ACTIONS.map(([n, label]) => <TitleAction key={n}><Icon n={n} s={20} />{label}</TitleAction>)}
        </TitleActions>
        <WinButton aria-label="最小化窗口"><Icon n="min" /></WinButton>
        <WinButton aria-label="还原窗口"><Icon n="restore" s={18} /></WinButton>
        <WinButton aria-label="关闭窗口"><Icon n="close" s={18} /></WinButton>
      </TitleBar>
      <Frame>
        <TabStrip>
          <RibbonTab $kind="file">文件</RibbonTab>
          <RibbonTab>查看器</RibbonTab>
          <RibbonTab $kind="on">编辑器</RibbonTab>
          <RibbonTab>高级</RibbonTab>
          <RibbonTab>输出</RibbonTab>
          <StripTools>
            <PlainButton aria-label="样式"><Icon n="editDoc" /><Caret /></PlainButton>
            <PlainButton aria-label="收起功能区"><Icon n="collapse" s={18} /></PlainButton>
            <PlainButton aria-label="帮助"><Icon n="help" /><Caret /></PlainButton>
          </StripTools>
        </TabStrip>
        <RibbonBar />
        <DocTabs>
          <DocTab $on>Drawing4.dxf<SmallButton aria-label="关闭标签"><Icon n="closeTab" s={14} /></SmallButton></DocTab>
          <DocTab>Drawing3.dwg</DocTab>
          <Spacer />
          <SmallButton aria-label="更多图纸"><Icon n="heart" /></SmallButton>
        </DocTabs>
        <Work>
          <SidePanel />
          <Workspace />
        </Work>
        <Command>
          <PaneTitle><PaneName>命令行</PaneName></PaneTitle>
          <Log>
            <LogText>
              <LogLine>Marker</LogLine>
              <LogLine $big>单行文本</LogLine>
            </LogText>
            <VBar $at={40}><Icon n="sbUp" /><Thumb /><BottomEnd><Icon n="sbDown" /></BottomEnd></VBar>
          </Log>
          <InputRow>
            <InputLabel>命令行:</InputLabel>
            <CommandInput type="text" />
          </InputRow>
        </Command>
        <StatusBar>
          <StatusFile>Drawing4.dxf</StatusFile>
          <StatusCount>4/14</StatusCount>
          <StatusIcons><Icon n="statMagnet" /><Icon n="statGrid" /><Icon n="statPerp" /><Icon n="statTarget" /></StatusIcons>
          <StatusPos>(202.2935; 596.8539; 0)</StatusPos>
        </StatusBar>
      </Frame>
      <ImeBar>
        <ImeLogo>
          <svg width="32" height="32" viewBox="0 0 32 32" aria-hidden="true">
            <rect x="3" y="3" width="26" height="26" rx="4" fill="#ef4f22" transform="rotate(-12 16 16)" />
            <path d="M25 8C15 6 7 9 9 13s15 2 14 7-10 4-16 2" fill="none" stroke="#fff" strokeWidth="4" />
          </svg>
        </ImeLogo>
        {["zh", "punct", "mic", "keyboard", "apps"].map(n => <Icon key={n} n={n} />)}
      </ImeBar>
      <Activate>
        <ActivateTitle>激活 Windows</ActivateTitle>
        转到“设置”以激活 Windows。
      </Activate>
      <Toast role="status">
        <Shield>
          <svg width="41" height="41" viewBox="0 0 41 41" aria-hidden="true">
            <circle cx="20.5" cy="20.5" r="20" fill="#343a48" />
            <path d="M20.5 10.500c4 0 7 1 10 2.500 0 9-4 15-10 19-6-4-10-10-10-19 3-1.500 6-2.500 10-2.500z" fill="none" stroke="#d0d5dd" strokeWidth="2" />
            <path d="m12 15 8.500 7 8.500-7" fill="none" stroke="#d0d5dd" strokeWidth="2.5" />
          </svg>
        </Shield>
        <ToastTop>
          <span>内存已超标，需要<Gold href="#boost">深度加速</Gold></span>
          <ToastClose aria-label="关闭提示"><Icon n="thinClose" s={12} /></ToastClose>
        </ToastTop>
        <ToastBottom>深度加速关闭卡慢进程<Boost>深度加速</Boost></ToastBottom>
      </Toast>
      <IflyBar>
        <svg width="22" height="22" viewBox="0 0 22 22" aria-hidden="true">
          <circle cx="11" cy="11" r="9.5" fill="none" stroke="#3560e0" strokeWidth="1.8" />
          <text x="3" y="14" fontSize="7" fontWeight="700" fill="#3560e0">iFLY</text>
        </svg>
        {["zh", "punct", "mic", "person", "apps"].map(n => <Icon key={n} n={n} />)}
      </IflyBar>
      <SiteMark>
        <svg width="42" height="42" viewBox="0 0 42 42" aria-hidden="true">
          <path d="M38 2C20 2 4 12 6 26c1 5 6 6 10 5C10 24 18 8 38 2z" fill="#4aa0dc" />
          <path d="M18 17c8-6 18-4 20 3 2 9-9 19-24 21 10-4 17-12 14-17-2-3-7-2-10 1z" fill="#7cc04c" />
        </svg>
        <div>
          <SiteName>极光下载站</SiteName>
          <SiteUrl>www.xz7.com</SiteUrl>
        </div>
      </SiteMark>
    </Shell>
  );
}
